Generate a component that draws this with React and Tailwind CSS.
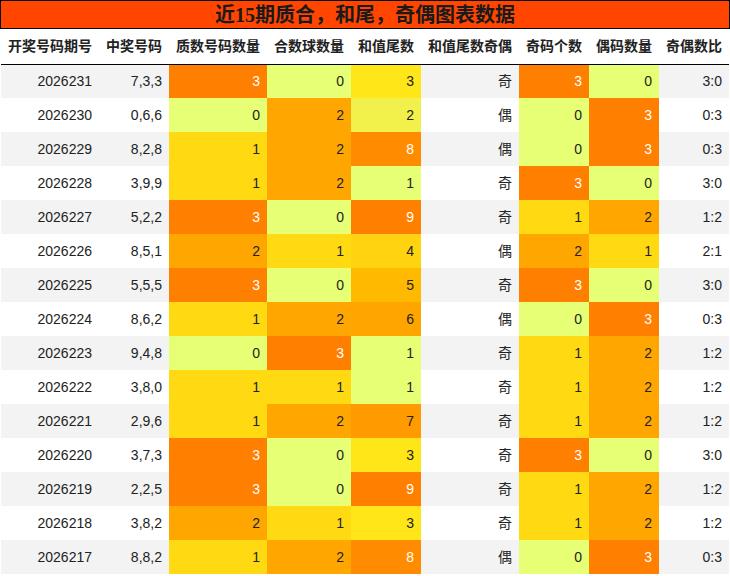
const ROWS = [
  ['2026231', '7,3,3', 3, 0, 3, '奇', 3, 0, '3:0'],
  ['2026230', '0,6,6', 0, 2, 2, '偶', 0, 3, '0:3'],
  ['2026229', '8,2,8', 1, 2, 8, '偶', 0, 3, '0:3'],
  ['2026228', '3,9,9', 1, 2, 1, '奇', 3, 0, '3:0'],
  ['2026227', '5,2,2', 3, 0, 9, '奇', 1, 2, '1:2'],
  ['2026226', '8,5,1', 2, 1, 4, '偶', 2, 1, '2:1'],
  ['2026225', '5,5,5', 3, 0, 5, '奇', 3, 0, '3:0'],
  ['2026224', '8,6,2', 1, 2, 6, '偶', 0, 3, '0:3'],
  ['2026223', '9,4,8', 0, 3, 1, '奇', 1, 2, '1:2'],
  ['2026222', '3,8,0', 1, 1, 1, '奇', 1, 2, '1:2'],
  ['2026221', '2,9,6', 1, 2, 7, '奇', 1, 2, '1:2'],
  ['2026220', '3,7,3', 3, 0, 3, '奇', 3, 0, '3:0'],
  ['2026219', '2,2,5', 3, 0, 9, '奇', 1, 2, '1:2'],
  ['2026218', '3,8,2', 2, 1, 3, '奇', 1, 2, '1:2'],
  ['2026217', '8,8,2', 1, 2, 8, '偶', 0, 3, '0:3'],
];

const HEADERS = [
  ['开奖号码期号', 'w-[98px]'],
  ['中奖号码', 'w-[70px]'],
  ['质数号码数量', 'w-[98px]'],
  ['合数球数量', 'w-[84px]'],
  ['和值尾数', 'w-[70px]'],
  ['和值尾数奇偶', 'w-[98px]'],
  ['奇码个数', 'w-[70px]'],
  ['偶码数量', 'w-[70px]'],
  ['奇偶数比', 'w-[70px]'],
];

// counts 0..3
const COUNT_BG = ['bg-[#e6ff75]', 'bg-[#ffd912]', 'bg-[#ffa700]', 'bg-[#ff8000] text-white'];

// tail digit 0..9
const TAIL_BG = [
  'bg-[#e6ff75]',
  'bg-[#e6ff75]',
  'bg-[#f2f04a]',
  'bg-[#ffe619]',
  'bg-[#ffd30f]',
  'bg-[#ffba00]',
  'bg-[#ffa500]',
  'bg-[#ff9a00] ',
  'bg-[#ff8c00] text-white',
  'bg-[#ff7f00] text-white',
];

function Cell({ children, className = '' }) {
  return <td className={`h-[34px] px-[7px] text-right whitespace-nowrap ${className}`}>{children}</td>;
}

export default function App() {
  return (
    <div className="w-[730px] bg-white text-[#222] text-[14px]" style={{ fontFamily: '"Liberation Sans", "Noto Sans CJK SC", sans-serif' }}>
      <div
        className="h-[29px] border border-black bg-[#ff4500] flex items-center justify-center text-[20px] font-bold text-[#1a1a1a]"
        style={{ fontFamily: '"Liberation Serif", "Noto Sans CJK SC", serif' }}
      >
        近15期质合，和尾，奇偶图表数据
      </div>
      <table className="mx-[1px] w-[728px] border-collapse table-fixed">
        <thead>
          <tr className="border-b border-black">
            {HEADERS.map(([h, w]) => (
              <th key={h} className={`${w} h-[35px] px-[7px] font-bold text-center whitespace-nowrap`}>
                {h}
              </th>
            ))}
          </tr>
        </thead>
        <tbody>
          {ROWS.map((r, i) => (
            <tr key={r[0]} className={i % 2 === 0 ? 'bg-[#f3f3f3]' : 'bg-white'}>
              <Cell>{r[0]}</Cell>
              <Cell>{r[1]}</Cell>
              <Cell className={COUNT_BG[r[2]]}>{r[2]}</Cell>
              <Cell className={COUNT_BG[r[3]]}>{r[3]}</Cell>
              <Cell className={TAIL_BG[r[4]]}>{r[4]}</Cell>
              <Cell>{r[5]}</Cell>
              <Cell className={COUNT_BG[r[6]]}>{r[6]}</Cell>
              <Cell className={COUNT_BG[r[7]]}>{r[7]}</Cell>
              <Cell>{r[8]}</Cell>
            </tr>
          ))}
        </tbody>
      </table>
    </div>
  );
}
